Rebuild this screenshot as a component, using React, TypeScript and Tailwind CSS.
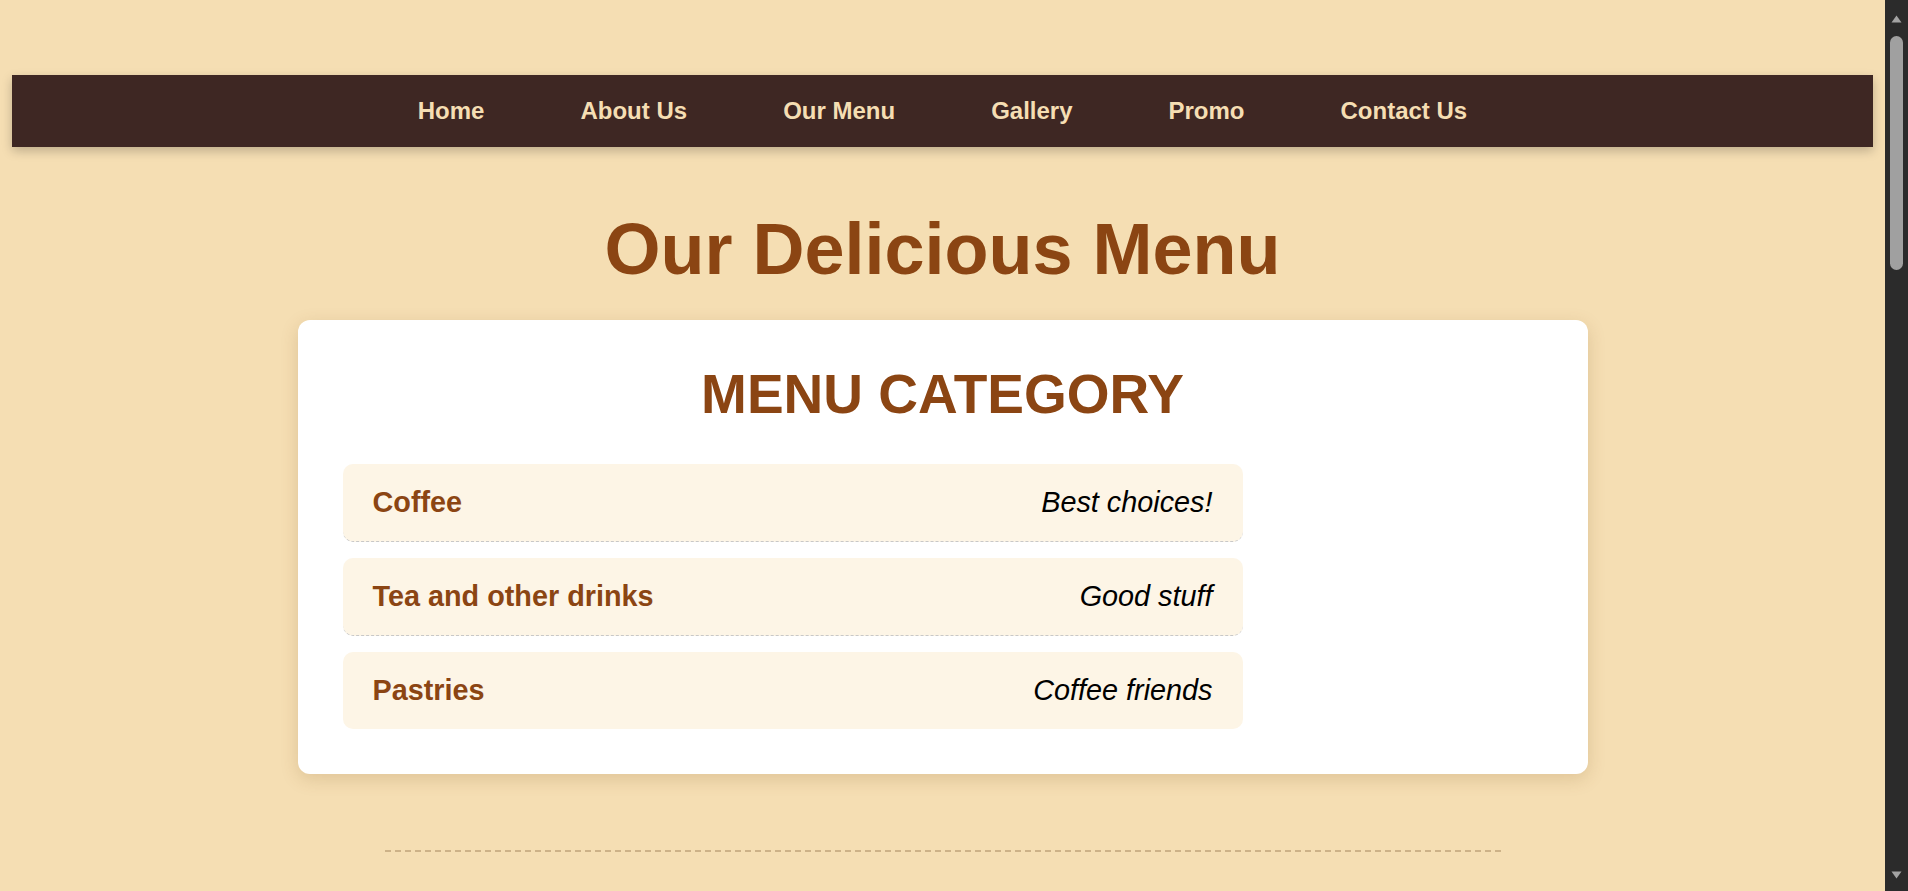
/**
 * Cafe menu page — nav bar, page title and the menu category card.
 */

const NAV_LINKS = ['Home', 'About Us', 'Our Menu', 'Gallery', 'Promo', 'Contact Us'];

interface Category {
  name: string;
  note: string;
}

const CATEGORIES: Category[] = [
  { name: 'Coffee', note: 'Best choices!' },
  { name: 'Tea and other drinks', note: 'Good stuff' },
  { name: 'Pastries', note: 'Coffee friends' },
];

function NavBar() {
  return (
    <nav className="flex h-[72px] items-center justify-center bg-[#3e2723] shadow-[0_4px_10px_rgba(0,0,0,0.22)]">
      {NAV_LINKS.map((link) => (
        <a
          key={link}
          href="#"
          className="px-[48px] text-[24px] leading-[28px] font-bold text-[#f5deb3]"
        >
          {link}
        </a>
      ))}
    </nav>
  );
}

function CategoryRow({ name, note, last }: Category & { last: boolean }) {
  return (
    <li
      className={`flex items-center justify-between rounded-[10px] bg-[#fdf5e6] px-[30px] py-[22px] text-[28.8px] leading-[33px] ${
        last ? '' : 'border-b border-dashed border-[#c8c8c8]'
      }`}
    >
      <span className="font-bold text-[#8b4513]">{name}</span>
      <span className="italic text-black">{note}</span>
    </li>
  );
}

// browser scrollbar as it shows in the screenshot (dark theme)
function ScrollBar() {
  return (
    <aside className="flex w-[23px] shrink-0 flex-col items-center bg-[#2b2b2b] pt-[15px] pb-[12px]">
      <svg width="11" height="8" viewBox="0 0 11 8">
        <path d="M5.5 0.5 L10.5 7.5 L0.5 7.5 Z" fill="#a3a3a3" />
      </svg>
      <div className="mt-[13px] h-[234px] w-[13px] rounded-full bg-[#a0a0a0]" />
      <div className="flex-1" />
      <svg width="11" height="8" viewBox="0 0 11 8">
        <path d="M0.5 0.5 L10.5 0.5 L5.5 7.5 Z" fill="#a3a3a3" />
      </svg>
    </aside>
  );
}

export default function App() {
  return (
    <div className="flex h-screen overflow-hidden bg-[#f5deb3] font-['Liberation_Sans',Arial,sans-serif]">
      <main className="min-w-0 flex-1 overflow-hidden px-[12px] pt-[75px]">
        <NavBar />

        <h1 className="mt-[61px] text-center text-[72px] leading-[83px] font-bold text-[#8b4513]">
          Our Delicious Menu
        </h1>

        {/* Category card */}
        <section className="mx-auto mt-[29px] w-[1290px] rounded-[12px] bg-white px-[45px] pt-[43px] pb-[45px] shadow-[0_5px_18px_rgba(120,80,20,0.18)]">
          <h2 className="mb-[39px] text-center text-[55px] leading-[62px] font-bold text-[#8b4513]">
            MENU CATEGORY
          </h2>
          <ul className="flex w-3/4 flex-col gap-[16px]">
            {CATEGORIES.map((c, i) => (
              <CategoryRow key={c.name} {...c} last={i === CATEGORIES.length - 1} />
            ))}
          </ul>
        </section>

        <footer className="mx-auto mt-[76px] w-[1116px] border-t-2 border-dashed border-[#cdb288]" />
      </main>
      <ScrollBar />
    </div>
  );
}
